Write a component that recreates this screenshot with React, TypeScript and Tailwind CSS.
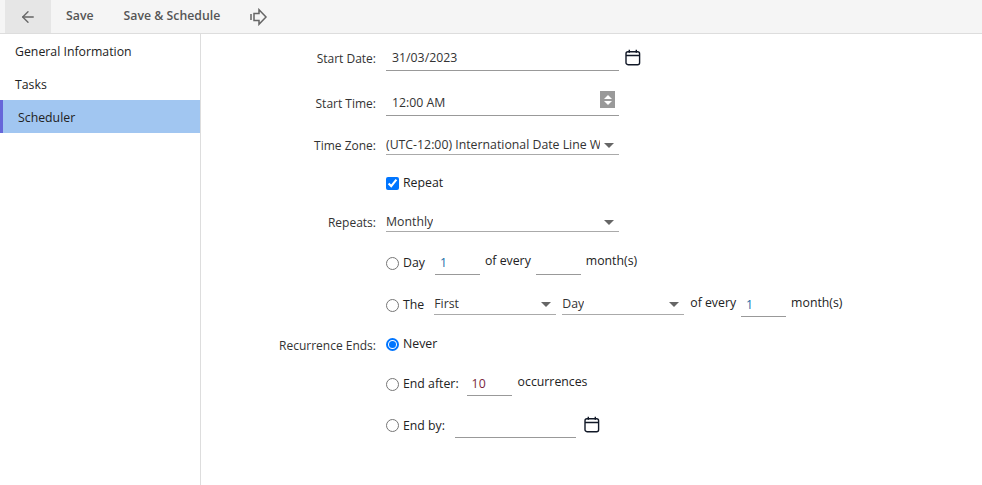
import { ArrowLeft } from "lucide-react";

function CalendarIcon() {
  return (
    <svg width="16" height="17" viewBox="0 0 16 17" fill="none" stroke="#111827" strokeWidth="1.4">
      <rect x="1" y="2.7" width="13.6" height="13" rx="2" />
      <path d="M1 6.5h13.6M4.3 .8v3M11.3 .8v3" />
    </svg>
  );
}

function Caret() {
  return <span className="ml-auto mr-[5px] h-0 w-0 shrink-0 border-x-[5px] border-t-[5px] border-x-transparent border-t-[#666]" />;
}

function Radio({ checked = false, className = "" }: { checked?: boolean; className?: string }) {
  return checked ? (
    <span className={`flex h-[13px] w-[13px] shrink-0 items-center justify-center rounded-full border-2 border-[#0075ff] ${className}`}>
      <span className="h-[7px] w-[7px] rounded-full bg-[#0075ff]" />
    </span>
  ) : (
    <span className={`h-[13px] w-[13px] shrink-0 rounded-full border border-[#767676] bg-white ${className}`} />
  );
}

function Select({ value, className }: { value: string; className: string }) {
  return (
    <div className={`flex h-[23px] items-center border-b border-[#aaa] pt-[4px] ${className}`}>
      <span className="overflow-hidden whitespace-nowrap text-[#333]">{value}</span>
      <Caret />
    </div>
  );
}

function NumberBox({ value, color = "text-[#1b6ca8]" }: { value?: string; color?: string }) {
  return (
    <div className={`h-[23px] w-[45px] border-b border-[#999] pl-[5px] pt-[2px] leading-[18px] ${color}`}>{value}</div>
  );
}

function Row({ label, labelClass = "", className, children }: { label?: string; labelClass?: string; className: string; children: React.ReactNode }) {
  return (
    <div className={`flex ${className}`}>
      <div className={`w-[175px] shrink-0 self-center whitespace-nowrap text-right text-[12px] text-[#333] ${labelClass}`}>{label}</div>
      <div className="ml-[10px] flex items-center">{children}</div>
    </div>
  );
}

export default function App() {
  return (
    <div className="flex h-[485px] w-[982px] flex-col overflow-hidden bg-white font-['Open_Sans','Noto_Sans',sans-serif] text-[12.3px] text-[#222]">
      <div className="flex h-[34px] shrink-0 items-center border-b border-[#ddd] bg-[#f5f5f5] text-[#555]">
        <button className="ml-[5px] flex h-[33px] w-[46px] items-center justify-center bg-[#e6e6e6]">
          <ArrowLeft size={18} strokeWidth={1.8} color="#666" />
        </button>
        <span className="ml-[15px] font-semibold">Save</span>
        <span className="ml-[30px] font-semibold">Save &amp; Schedule</span>
        <svg className="ml-[30px]" width="18" height="18" viewBox="0 0 18 18" fill="none" stroke="#666" strokeWidth="1.5">
          <path d="M1 6v6M4 5.500h5V1.700L16 9l-7 7.300V12.500H4z" />
        </svg>
      </div>
      <div className="flex flex-1">
        <div className="w-[201px] shrink-0 border-r border-[#ddd]">
          <div className="flex h-[33px] items-center pl-[15px] pt-[4px]">General Information</div>
          <div className="flex h-[33px] items-center pl-[15px] pt-[4px]">Tasks</div>
          <div className="flex h-[33px] items-center border-l-[3px] border-[#6666d9] bg-[#a1c6f1] pl-[15px] pt-[4px] font-medium text-[#222]">Scheduler</div>
        </div>
        <div className="flex-1">
          <Row label="Start Date:" className="mt-[13px] h-[24px]">
            <div className="flex h-[24px] w-[233px] items-center border-b border-[#999] pl-[6px] text-[#333]">31/03/2023</div>
            <span className="-mt-[4px] ml-[6px]"><CalendarIcon /></span>
          </Row>
          <Row label="Start Time:" className="mt-[21px] h-[24px]">
            <div className="flex h-[24px] w-[233px] items-center border-b border-[#999] pl-[6px] text-[#333]">
              12:00 AM
              <span className="mb-[8px] ml-auto mr-[4px] flex h-[17px] w-[15px] flex-col items-center justify-center gap-[2px] bg-[#999]">
                <span className="h-0 w-0 border-x-[4px] border-b-[4px] border-x-transparent border-b-white" />
                <span className="h-0 w-0 border-x-[4px] border-t-[4px] border-x-transparent border-t-white" />
              </span>
            </div>
          </Row>
          <Row label="Time Zone:" labelClass="pt-[4px]" className="mt-[16px] h-[23px]">
            <Select value="(UTC-12:00) International Date Line W" className="w-[233px] [&>span:first-child]:w-[214px]" />
          </Row>
          <Row className="mt-[16px] h-[24px]">
            <label className="flex items-center">
              <input type="checkbox" defaultChecked className="m-0 h-[13px] w-[13px] accent-[#0075ff]" />
              <span className="ml-[4px]">Repeat</span>
            </label>
          </Row>
          <Row label="Repeats:" labelClass="pt-[4px]" className="mt-[14px] h-[23px]">
            <Select value="Monthly" className="w-[233px]" />
          </Row>
          <Row className="mt-[19px] h-[24px]">
            <Radio />
            <span className="ml-[4px]">Day</span>
            <span className="ml-[10px]"><NumberBox value="1" /></span>
            <span className="-mt-[4px] ml-[5px]">of every</span>
            <span className="ml-[5px]"><NumberBox /></span>
            <span className="-mt-[4px] ml-[5px]">month(s)</span>
          </Row>
          <Row className="mt-[17px] h-[24px]">
            <Radio className="mt-[2px]" />
            <span className="ml-[4px] mt-[2px]">The</span>
            <Select value="First" className="-mt-[2px] ml-[10px] w-[122px]" />
            <Select value="Day" className="-mt-[2px] ml-[6px] w-[122px]" />
            <span className="-mt-[2px] ml-[6px]">of every</span>
            <span className="ml-[5px] mt-[2px]"><NumberBox value="1" /></span>
            <span className="-mt-[2px] ml-[5px]">month(s)</span>
          </Row>
          <Row label="Recurrence Ends:" labelClass="pt-[2px]" className="mt-[17px] h-[24px]">
            <Radio checked className="-mt-[2px]" />
            <span className="-mt-[2px] ml-[4px]">Never</span>
          </Row>
          <Row className="mt-[15px] h-[24px]">
            <Radio />
            <span className="ml-[4px]">End after:</span>
            <span className="ml-[8px]"><NumberBox value="10" color="text-[#7a1f3d]" /></span>
            <span className="-mt-[4px] ml-[6px]">occurrences</span>
          </Row>
          <Row className="mt-[18px] h-[24px]">
            <Radio className="-mt-[2px]" />
            <span className="ml-[4px]">End by:</span>
            <div className="ml-[10px] h-[24px] w-[121px] border-b border-[#999]" />
            <span className="-mt-[3px] ml-[8px]"><CalendarIcon /></span>
          </Row>
        </div>
      </div>
    </div>
  );
}
